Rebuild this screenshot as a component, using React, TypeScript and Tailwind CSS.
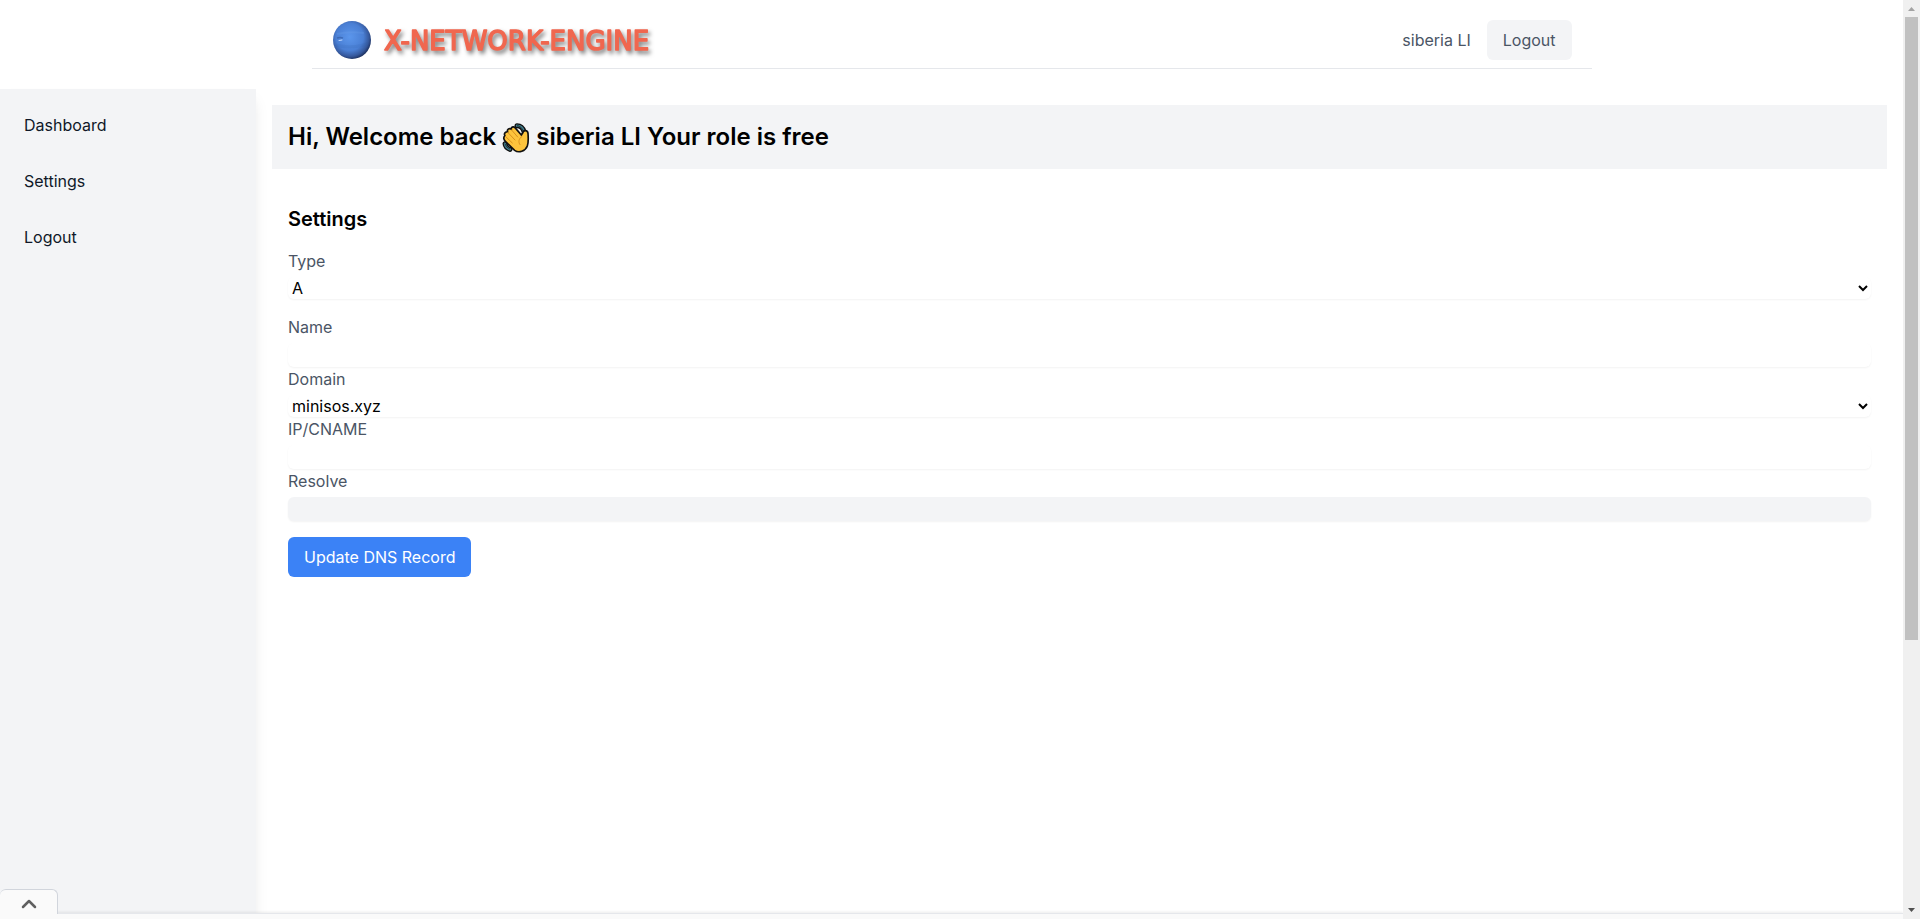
import React from 'react';
import { ChevronUp } from 'lucide-react';

const navItems = ['Dashboard', 'Settings', 'Logout'];

const fieldBase = 'mt-1 block w-full rounded-md text-base shadow-xs outline-none';

const PlanetLogo = () => (
    <svg width="40" height="40" viewBox="0 0 40 40" aria-hidden="true">
        <defs>
            <radialGradient id="planet" cx="44%" cy="42%" r="60%">
                <stop offset="0%" stopColor="#5b96ec" />
                <stop offset="60%" stopColor="#4a7fd4" />
                <stop offset="85%" stopColor="#35589c" />
                <stop offset="100%" stopColor="#1c2f5c" />
            </radialGradient>
        </defs>
        <circle cx="20" cy="20" r="19" fill="url(#planet)" />
        <path d="M5 14 Q16 11 32 13" stroke="#7aabf2" strokeWidth="2" fill="none" opacity="0.2" />
        <path d="M4 25 Q18 29 36 24" stroke="#2f5cab" strokeWidth="3" fill="none" opacity="0.15" />
        <path d="M5 18 Q8 17 11 18" stroke="#2c4f91" strokeWidth="1.5" fill="none" opacity="0.5" />
        <path d="M7 20.5 L10 20" stroke="#c4dbff" strokeWidth="1" strokeLinecap="round" />
    </svg>
);

const Wordmark = () => (
    <svg width="284" height="36" viewBox="0 0 284 36" className="drop-shadow-[2px_3px_2px_rgba(0,0,0,0.5)]">
        <text
            x="0"
            y="28"
            fontSize="26"
            fill="#f0674f"
            stroke="#f0674f"
            strokeWidth="1.5"
            strokeLinejoin="round"
            className="font-['Comic_Sans_MS','DejaVu_Sans',sans-serif]"
        >
            X-NETWORK-ENGINE
        </text>
    </svg>
);

const WavingHand = () => (
    <svg className="mx-1.5 inline-block align-middle" width="28" height="30" viewBox="0 0 84 90" role="img" aria-label="waving hand">
        <g fill="none" strokeLinecap="round">
            <path d="M45 8 Q61 8 66 26" stroke="#111" strokeWidth="15" />
            <path d="M9 62 Q10 74 24 79" stroke="#111" strokeWidth="15" />
            <path d="M45 8 Q61 8 66 26" stroke="#3f7f8f" strokeWidth="7" />
            <path d="M9 62 Q10 74 24 79" stroke="#3f7f8f" strokeWidth="7" />
            <path d="M46 8 Q59 9 64 25" stroke="#111" strokeWidth="2" />
            <path d="M9 63 Q11 73 23 78" stroke="#111" strokeWidth="2" />
        </g>
        <path
            d="M58 36 L39 14 C34 9 26 13 28 19 C21 14 14 20 17 27 C9 25 5 33 9 39 C3 42 5 50 10 55 L38 82 C50 91 70 85 76 69 C80 58 79 44 78 31 C77 21 64 20 62 30 Z"
            fill="#fdc43c"
            stroke="#111"
            strokeWidth="5"
            strokeLinejoin="round"
        />
        <path d="M28 20 L47 42 M17 28 L39 51 M10 40 L31 60 M60 40 C50 47 48 57 54 65" fill="none" stroke="#d8921f" strokeWidth="3" strokeLinecap="round" />
    </svg>
);

const Header = () => (
    <header className="mx-auto mb-5 flex w-full max-w-7xl items-center justify-between border-b border-gray-200 px-5 pt-5 pb-2">
        <a href="#" className="flex items-center gap-3">
            <PlanetLogo />
            <Wordmark />
        </a>
        <div className="flex items-center gap-4 text-gray-600">
            <span>siberia LI</span>
            <button type="button" className="rounded-md bg-gray-100 px-4 py-2">
                Logout
            </button>
        </div>
    </header>
);

const Sidebar = () => (
    <aside className="w-64 shrink-0 bg-gray-100 shadow-lg">
        <nav className="p-2">
            {navItems.map((item) => (
                <a key={item} href="#" className="block p-4 text-gray-900">
                    {item}
                </a>
            ))}
        </nav>
    </aside>
);

const SettingsForm = () => (
    <form className="px-4 pt-9 text-gray-600" onSubmit={(e) => e.preventDefault()}>
        <h2 className="mb-4 text-xl font-semibold text-black">Settings</h2>

        <div className="mb-4">
            <label htmlFor="type" className="block">Type</label>
            <select id="type" className={`${fieldBase} h-[22px] bg-white text-black`}>
                <option>A</option>
                <option>CNAME</option>
            </select>
        </div>

        <label htmlFor="name" className="block">Name</label>
        <input id="name" type="text" className={`${fieldBase} h-6 bg-white`} />

        <label htmlFor="domain" className="block">Domain</label>
        <select id="domain" className={`${fieldBase} h-[22px] bg-white text-black`}>
            <option>minisos.xyz</option>
        </select>

        <label htmlFor="target" className="block">IP/CNAME</label>
        <input id="target" type="text" className={`${fieldBase} h-6 bg-white`} />

        <label htmlFor="resolve" className="block">Resolve</label>
        <input id="resolve" type="text" readOnly className={`${fieldBase} h-6 bg-gray-100`} />

        <button type="submit" className="mt-4 rounded-md bg-[#3b82f6] px-4 py-2 text-white">
            Update DNS Record
        </button>
    </form>
);

// Collapsed drawer pinned to the bottom edge
const BottomDrawer = () => (
    <div className="absolute inset-x-0 bottom-0">
        <button
            type="button"
            aria-label="Expand panel"
            className="relative z-10 -mb-px flex h-[25px] w-[58px] items-center justify-center rounded-t-md border-t border-r border-gray-300 bg-[#fafafa] pt-1 text-[#606060]"
        >
            <ChevronUp size={24} strokeWidth={2.5} className="shrink-0" />
        </button>
        <div className="h-1.5 border-t border-gray-200 bg-[#fafafa] shadow-[0_-1px_3px_rgba(0,0,0,0.08)]" />
    </div>
);

const ScrollTrack = () => (
    <div className="flex w-[17px] shrink-0 flex-col items-center bg-[#f0f0f0]" aria-hidden="true">
        <div className="flex h-full w-[13px] flex-col items-center">
            <svg className="shrink-0" width="13" height="17" viewBox="0 0 13 17">
                <path d="M3 11 L6.5 7 L10 11 Z" fill="#a3a3a3" />
            </svg>
            <div className="w-full grow">
                <div className="h-[70.4%] bg-[#c1c1c1]" />
            </div>
            <svg className="shrink-0" width="13" height="17" viewBox="0 0 13 17">
                <path d="M3 6 L6.5 10 L10 6 Z" fill="#505050" />
            </svg>
        </div>
    </div>
);

const App: React.FC = () => {
    return (
        <div className="flex h-screen overflow-hidden bg-white font-['Inter',sans-serif] text-base">
            <div className="relative flex min-w-0 flex-1 flex-col overflow-hidden">
                <Header />
                <div className="flex min-h-0 flex-1">
                    <Sidebar />
                    <main className="min-w-0 flex-1 p-4">
                        <h1 className="bg-gray-100 p-4 text-2xl font-semibold text-black">
                            Hi, Welcome back
                            <WavingHand />
                            siberia LI Your role is free
                        </h1>
                        <SettingsForm />
                    </main>
                </div>
                <BottomDrawer />
            </div>
            <ScrollTrack />
        </div>
    );
};

export default App;
